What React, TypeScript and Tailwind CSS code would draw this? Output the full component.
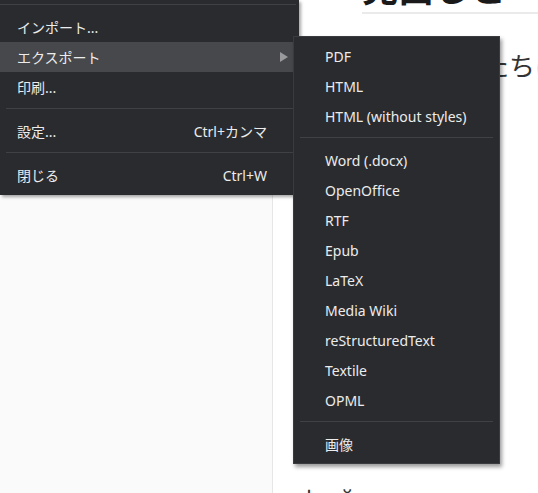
const MENU_FONT = { fontFamily: '"Segoe UI", "Noto Sans", "Noto Sans CJK JP", sans-serif' };

type Item = { label: string; shortcut?: string; submenu?: boolean; active?: boolean } | 'sep';

const MAIN: Item[] = [
  { label: 'インポート...' },
  { label: 'エクスポート', submenu: true, active: true },
  { label: '印刷...' },
  'sep',
  { label: '設定...', shortcut: 'Ctrl+カンマ' },
  'sep',
  { label: '閉じる', shortcut: 'Ctrl+W' },
];

const EXPORT: Item[] = [
  { label: 'PDF' },
  { label: 'HTML' },
  { label: 'HTML (without styles)' },
  'sep',
  { label: 'Word (.docx)' },
  { label: 'OpenOffice' },
  { label: 'RTF' },
  { label: 'Epub' },
  { label: 'LaTeX' },
  { label: 'Media Wiki' },
  { label: 'reStructuredText' },
  { label: 'Textile' },
  { label: 'OPML' },
  'sep',
  { label: '画像' },
];

function MenuRows({ items, indent }: { items: Item[]; indent: string }) {
  return (
    <>
      {items.map((it, i) =>
        it === 'sep' ? (
          <div key={i} className="mt-[6px] mb-[7px] mx-[6px] h-px bg-[#404144]" />
        ) : (
          <div
            key={i}
            className={`flex h-[30px] items-center text-[14px] text-[#ececec] ${indent} ${
              it.active ? 'bg-[#47484b]' : ''
            }`}
          >
            <span className="flex-1">{it.label}</span>
            {it.shortcut && <span className="mr-[32px]">{it.shortcut}</span>}
            {it.submenu && (
              <svg width="8" height="10" viewBox="0 0 8 10" className="mr-[11px]">
                <path d="M0 0 L8 5 L0 10 Z" fill="#9a9a9c" />
              </svg>
            )}
          </div>
        )
      )}
    </>
  );
}

export default function App() {
  return (
    <div className="relative h-[493px] w-[538px] overflow-hidden bg-white">
      {/* background: sidebar + document */}
      <div className="flex h-full">
        <div className="h-full w-[273px] border-r border-[#e6e6e6] bg-[#fafafa]" />
        <div
          className="min-w-0 flex-1 overflow-hidden pl-[89px]"
          style={{ fontFamily: '"Noto Sans CJK JP", sans-serif' }}
        >
          <h1 className="mt-[-37px] border-b-2 border-[#eaeaea] pb-[3px] text-[36px] font-bold leading-[46px] whitespace-nowrap text-[#1a1a1a]">
            見出しと
          </h1>
          <p className="mt-[34px] ml-[95px] text-[26px] leading-[34px] whitespace-nowrap text-[#333]">
            私たちは
          </p>
          <p className="mt-[400px] ml-[-62px] text-[22px] leading-[30px] whitespace-nowrap text-[#333]">
            ф · й
          </p>
        </div>
      </div>

      {/* main menu */}
      <div
        className="absolute left-0 top-0 w-[299px] bg-[#2a2b2e] pt-[4px] pb-[5px] shadow-[2px_2px_3px_rgba(0,0,0,0.35)]"
        style={MENU_FONT}
      >
        <div className="mb-[7px] mr-[3px] h-px bg-[#404144]" />
        <MenuRows items={MAIN} indent="pl-[17px]" />
      </div>

      {/* export submenu */}
      <div
        className="absolute left-[293px] top-[36px] w-[207px] border border-[#3a3b3e] bg-[#2a2b2e] pt-[4px] pb-[4px] shadow-[2px_3px_4px_rgba(0,0,0,0.4)]"
        style={MENU_FONT}
      >
        <MenuRows items={EXPORT} indent="pl-[31px]" />
      </div>
    </div>
  );
}
